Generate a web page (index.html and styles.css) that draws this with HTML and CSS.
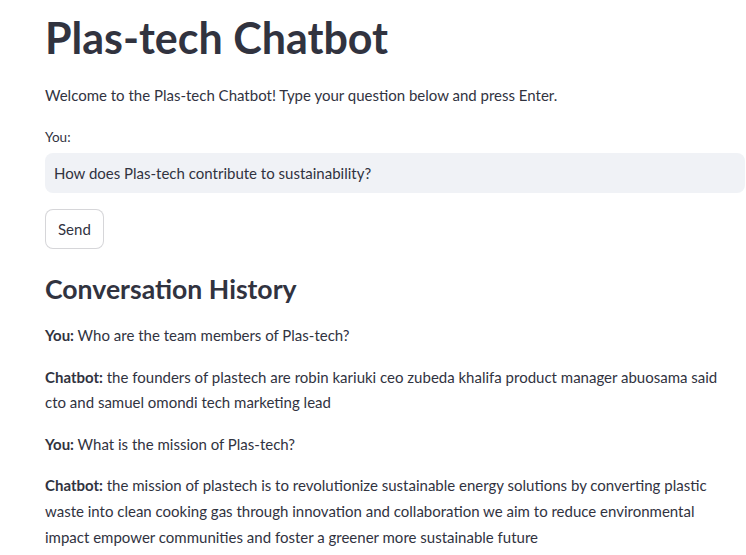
FILE: index.html
```html
<!DOCTYPE html>
<html lang="en">
<head>
<meta charset="utf-8">
<title>Plas-tech Chatbot</title>
<link rel="stylesheet" href="styles.css">
</head>
<body>
<main class="main">
  <h1 class="title">Plas-tech Chatbot</h1>
  <p class="intro">Welcome to the Plas-tech Chatbot! Type your question below and press Enter.</p>
  <label class="label" for="q">You:</label>
  <input class="input" id="q" type="text" value="How does Plas-tech contribute to sustainability?">
  <button class="btn" type="button">Send</button>
  <h3 class="subheader">Conversation History</h3>
  <div class="history">
    <p class="msg"><strong>You:</strong> Who are the team members of Plas-tech?</p>
    <p class="msg"><strong>Chatbot:</strong> the founders of plastech are robin kariuki ceo zubeda khalifa product manager abuosama said cto and samuel omondi tech marketing lead</p>
    <p class="msg"><strong>You:</strong> What is the mission of Plas-tech?</p>
    <p class="msg"><strong>Chatbot:</strong> the mission of plastech is to revolutionize sustainable energy solutions by converting plastic waste into clean cooking gas through innovation and collaboration we aim to reduce environmental impact empower communities and foster a greener more sustainable future</p>
  </div>
</main>
</body>
</html>
```
FILE: styles.css
```css
html, body {
  margin: 0;
  padding: 0;
  background: #ffffff;
}
body {
  font-family: "Lato", "Open Sans", sans-serif;
  color: rgb(49, 51, 63);
  font-size: 15px;
  overflow: hidden;
}
.main {
  display: flex;
  flex-direction: column;
  align-items: flex-start;
  width: 700px;
  padding-left: 45px;
}
.title {
  margin: 0;
  padding-top: 12px;
  font-size: 43px;
  line-height: 52px;
  font-weight: 700;
  letter-spacing: 0;
}
.intro {
  margin: 19px 0 0;
  line-height: 24px;
}
.label {
  margin-top: 20px;
  font-size: 13.5px;
  line-height: 20px;
}
.input {
  margin-top: 6px;
  box-sizing: border-box;
  width: 700px;
  height: 40px;
  border: none;
  border-radius: 8px;
  background: rgb(240, 242, 246);
  padding: 0 9px;
  font-family: inherit;
  font-size: 15px;
  color: rgb(49, 51, 63);
  outline: none;
}
.btn {
  margin-top: 16px;
  box-sizing: border-box;
  height: 40px;
  padding: 0 12px;
  border: 1px solid rgba(49, 51, 63, 0.2);
  border-radius: 8px;
  background: #ffffff;
  font-family: inherit;
  font-size: 15px;
  line-height: 38px;
  color: rgb(49, 51, 63);
}
.subheader {
  margin: 23px 0 0;
  font-size: 26.6px;
  line-height: 34px;
  font-weight: 700;
}
.history {
  margin-top: 17px;
  display: flex;
  flex-direction: column;
  gap: 16px;
  width: 686px;
}
.msg {
  margin: 0;
  line-height: 25.6px;
}
.msg strong {
  font-weight: 700;
}
```
